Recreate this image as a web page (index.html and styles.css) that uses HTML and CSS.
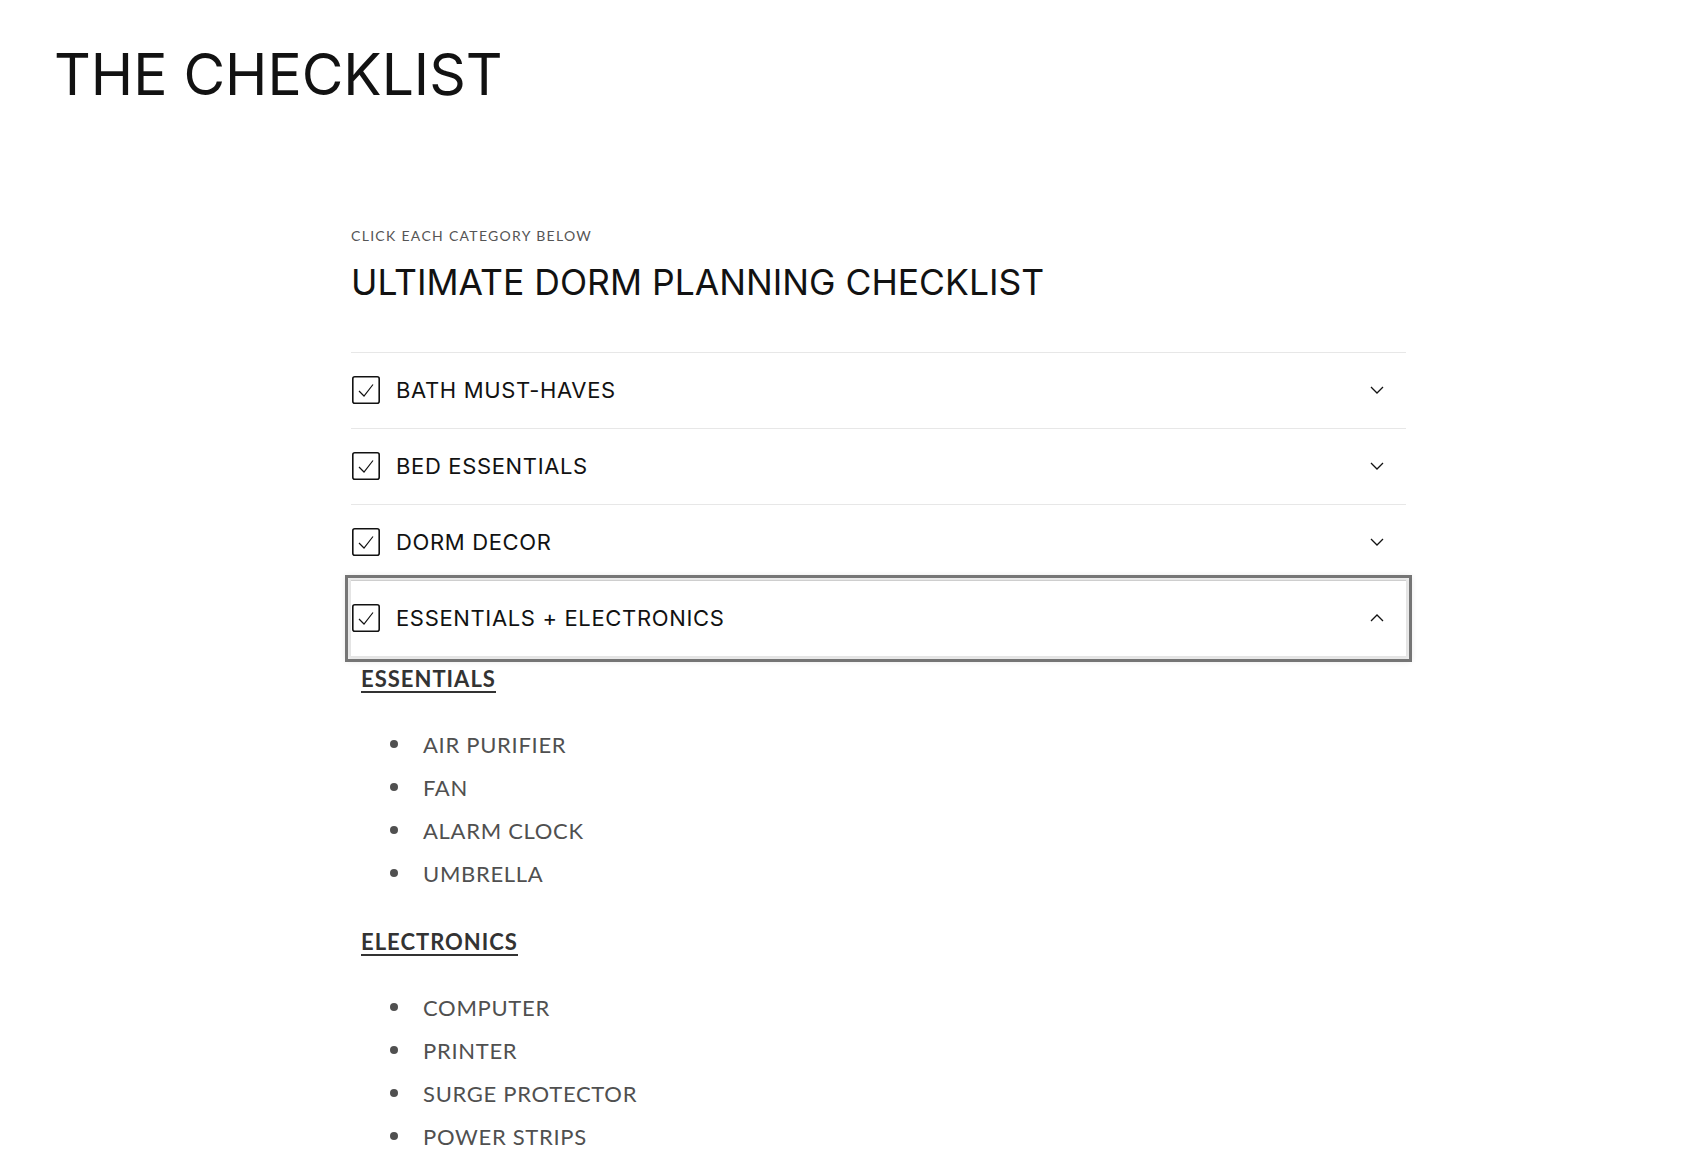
FILE: index.html
```html
<!DOCTYPE html>
<html lang="en">
<head>
    <meta charset="UTF-8">
    <meta name="viewport" content="width=device-width, initial-scale=1.0">
    <title>The Checklist</title>
    <link rel="stylesheet" href="styles.css">
</head>
<body>
    <header class="page-header">
        <h1 class="page-title">THE CHECKLIST</h1>
    </header>

    <main class="checklist">
        <p class="caption">CLICK EACH CATEGORY BELOW</p>
        <h2 class="checklist-title">ULTIMATE DORM PLANNING CHECKLIST</h2>

        <div class="accordion">
            <details class="accordion-item">
                <summary class="accordion-summary">
                    <span class="check-icon">
                        <svg viewBox="0 0 28 28" width="28" height="28"><rect x="0.8" y="0.8" width="26.4" height="26.4" rx="2" fill="none" stroke="#121212" stroke-width="1.6"/><path d="M7 15 L12 20 L21 8.5" fill="none" stroke="#121212" stroke-width="1.2"/></svg>
                    </span>
                    <span class="accordion-label">BATH MUST-HAVES</span>
                    <svg class="caret" viewBox="0 0 14 8" width="14" height="8"><path d="M1 1 L7 7 L13 1" fill="none" stroke="#121212" stroke-width="1.3"/></svg>
                </summary>
            </details>

            <details class="accordion-item">
                <summary class="accordion-summary">
                    <span class="check-icon">
                        <svg viewBox="0 0 28 28" width="28" height="28"><rect x="0.8" y="0.8" width="26.4" height="26.4" rx="2" fill="none" stroke="#121212" stroke-width="1.6"/><path d="M7 15 L12 20 L21 8.5" fill="none" stroke="#121212" stroke-width="1.2"/></svg>
                    </span>
                    <span class="accordion-label">BED ESSENTIALS</span>
                    <svg class="caret" viewBox="0 0 14 8" width="14" height="8"><path d="M1 1 L7 7 L13 1" fill="none" stroke="#121212" stroke-width="1.3"/></svg>
                </summary>
            </details>

            <details class="accordion-item">
                <summary class="accordion-summary">
                    <span class="check-icon">
                        <svg viewBox="0 0 28 28" width="28" height="28"><rect x="0.8" y="0.8" width="26.4" height="26.4" rx="2" fill="none" stroke="#121212" stroke-width="1.6"/><path d="M7 15 L12 20 L21 8.5" fill="none" stroke="#121212" stroke-width="1.2"/></svg>
                    </span>
                    <span class="accordion-label">DORM DECOR</span>
                    <svg class="caret" viewBox="0 0 14 8" width="14" height="8"><path d="M1 1 L7 7 L13 1" fill="none" stroke="#121212" stroke-width="1.3"/></svg>
                </summary>
            </details>

            <details class="accordion-item" open>
                <summary class="accordion-summary focused">
                    <span class="check-icon">
                        <svg viewBox="0 0 28 28" width="28" height="28"><rect x="0.8" y="0.8" width="26.4" height="26.4" rx="2" fill="none" stroke="#121212" stroke-width="1.6"/><path d="M7 15 L12 20 L21 8.5" fill="none" stroke="#121212" stroke-width="1.2"/></svg>
                    </span>
                    <span class="accordion-label">ESSENTIALS + ELECTRONICS</span>
                    <svg class="caret" viewBox="0 0 14 8" width="14" height="8"><path d="M1 7 L7 1 L13 7" fill="none" stroke="#121212" stroke-width="1.3"/></svg>
                </summary>
                <div class="accordion-content">
                    <h3 class="group-title">ESSENTIALS</h3>
                    <ul class="item-list">
                        <li>AIR PURIFIER</li>
                        <li>FAN</li>
                        <li>ALARM CLOCK</li>
                        <li>UMBRELLA</li>
                    </ul>
                    <h3 class="group-title">ELECTRONICS</h3>
                    <ul class="item-list">
                        <li>COMPUTER</li>
                        <li>PRINTER</li>
                        <li>SURGE PROTECTOR</li>
                        <li>POWER STRIPS</li>
                    </ul>
                </div>
            </details>
        </div>
    </main>
</body>
</html>
```

FILE: styles.css
```css
body {
    margin: 0;
    background-color: #ffffff;
    color: #121212;
    font-family: Lato, "Liberation Sans", sans-serif;
}
.page-header {
    padding: 41px 54px 0;
}
.page-title {
    margin: 0;
    font-family: Inter, "Noto Sans", sans-serif;
    font-weight: 400;
    font-size: 57px;
    line-height: 1.2;
    letter-spacing: 0;
    color: #121212;
}
.checklist {
    width: 1055px;
    margin: 118px 0 0 351px;
}
.caption {
    margin: 0;
    font-size: 14px;
    letter-spacing: 1.3px;
    color: #555555;
}
.checklist-title {
    margin: 16px 0 0;
    font-family: Inter, "Noto Sans", sans-serif;
    font-weight: 400;
    font-size: 35.5px;
    letter-spacing: 0;
    line-height: 1.3;
}
.accordion {
    margin-top: 45px;
}
.accordion-item {
    border-top: 1px solid #e7e7e7;
}
.accordion-summary {
    display: flex;
    align-items: center;
    height: 75px;
    list-style: none;
    cursor: pointer;
}
.accordion-summary::-webkit-details-marker {
    display: none;
}
.accordion-summary.focused {
    outline: 3px solid #757575;
    outline-offset: 3px;
    box-shadow: 0 0 6px 5px rgba(18, 18, 18, 0.12);
}
.check-icon {
    display: flex;
    width: 28px;
    height: 28px;
    margin-left: 1px;
}
.accordion-label {
    flex: 1;
    margin-left: 16px;
    font-family: Inter, "Noto Sans", sans-serif;
    font-size: 22px;
    letter-spacing: 0.65px;
}
.caret {
    margin-right: 22px;
}
.accordion-content {
    padding: 10px 0 0 10px;
}
.group-title {
    margin: 0;
    display: inline-block;
    font-size: 22px;
    font-weight: 700;
    letter-spacing: 1px;
    color: #333333;
    border-bottom: 2px solid #333333;
    line-height: 25px;
}
.item-list {
    margin: 30px 0 34px;
    padding: 0;
    list-style: none;
    color: #505050;
    font-size: 22px;
    letter-spacing: 0.7px;
    line-height: 43px;
}
.item-list li {
    display: flex;
    align-items: center;
    padding-left: 29px;
}
.item-list li::before {
    content: "";
    width: 8px;
    height: 8px;
    margin-right: 25px;
    border-radius: 50%;
    background-color: #505050;
}
```
